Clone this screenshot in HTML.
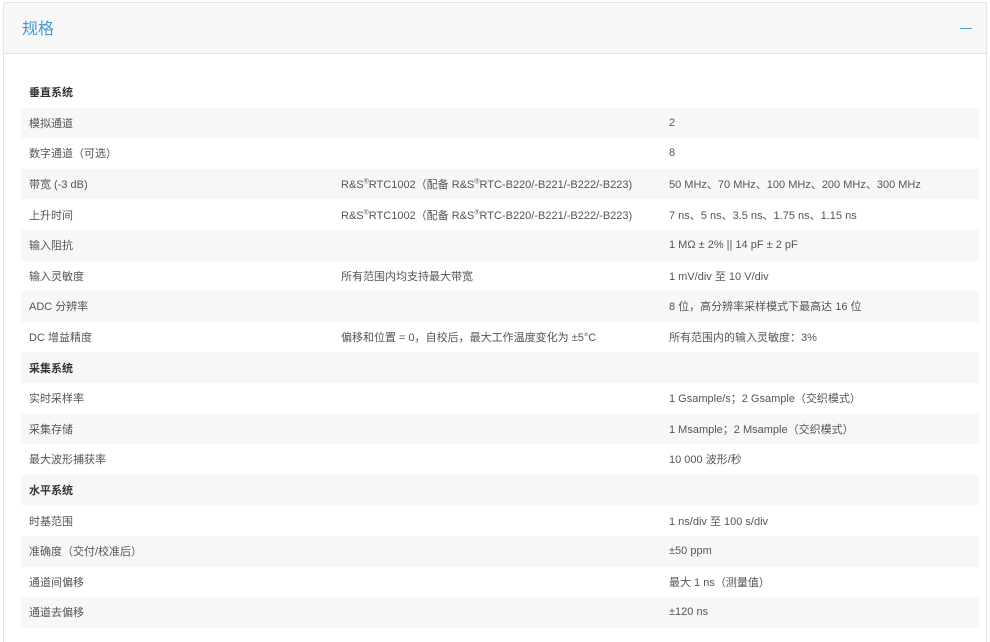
<!DOCTYPE html>
<html><head><meta charset="utf-8"><style>
*{margin:0;padding:0;box-sizing:border-box}
html,body{width:990px;height:631px;overflow:hidden;background:#fff}
body{font-family:"Liberation Sans","Noto Sans CJK SC",sans-serif;color:#555;font-size:11px}
.wrap{position:absolute;left:3px;top:2px;width:984px;height:640px;border:1px solid #e6e6e6;border-bottom:none}
.hd{height:51px;background:#f8f8f8;border-bottom:1px solid #e3e3e3;position:relative}
.hd .t{position:absolute;left:18px;top:12px;font-size:16px;color:#3d9bd6}
.hd .m{position:absolute;right:14px;top:25px;width:12px;height:1px;background:#4a9fd6}
table{position:absolute;left:17px;top:74px;width:958px;border-collapse:collapse}
td{height:30.6px;padding:0;vertical-align:middle;white-space:nowrap}
td:nth-child(1){padding-left:8px;width:320px}
td:nth-child(2){width:328px}
tr:nth-child(even) td{background:#f7f7f7}
tr.h td{font-weight:bold;color:#333}
</style></head><body>
<div class="wrap"><div class="hd"><span class="t">规格</span><span class="m"></span></div>
<table>
<tr class="h"><td>垂直系统</td><td></td><td></td></tr>
<tr><td>模拟通道</td><td></td><td>2</td></tr>
<tr><td>数字通道（可选）</td><td></td><td>8</td></tr>
<tr><td>带宽 (-3 dB)</td><td>R&amp;S<sup style="font-size:7px">®</sup>RTC1002（配备 R&amp;S<sup style="font-size:7px">®</sup>RTC-B220/-B221/-B222/-B223)</td><td>50 MHz、70 MHz、100 MHz、200 MHz、300 MHz</td></tr>
<tr><td>上升时间</td><td>R&amp;S<sup style="font-size:7px">®</sup>RTC1002（配备 R&amp;S<sup style="font-size:7px">®</sup>RTC-B220/-B221/-B222/-B223)</td><td>7 ns、5 ns、3.5 ns、1.75 ns、1.15 ns</td></tr>
<tr><td>输入阻抗</td><td></td><td>1 MΩ ± 2% || 14 pF ± 2 pF</td></tr>
<tr><td>输入灵敏度</td><td>所有范围内均支持最大带宽</td><td>1 mV/div 至 10 V/div</td></tr>
<tr><td>ADC 分辨率</td><td></td><td>8 位，高分辨率采样模式下最高达 16 位</td></tr>
<tr><td>DC 增益精度</td><td>偏移和位置 = 0，自校后，最大工作温度变化为 ±5°C</td><td>所有范围内的输入灵敏度：3%</td></tr>
<tr class="h"><td>采集系统</td><td></td><td></td></tr>
<tr><td>实时采样率</td><td></td><td>1 Gsample/s；2 Gsample（交织模式）</td></tr>
<tr><td>采集存储</td><td></td><td>1 Msample；2 Msample（交织模式）</td></tr>
<tr><td>最大波形捕获率</td><td></td><td>10 000 波形/秒</td></tr>
<tr class="h"><td>水平系统</td><td></td><td></td></tr>
<tr><td>时基范围</td><td></td><td>1 ns/div 至 100 s/div</td></tr>
<tr><td>准确度（交付/校准后）</td><td></td><td>±50 ppm</td></tr>
<tr><td>通道间偏移</td><td></td><td>最大 1 ns（测量值）</td></tr>
<tr><td>通道去偏移</td><td></td><td>±120 ns</td></tr>
</table></div>
</body></html>
